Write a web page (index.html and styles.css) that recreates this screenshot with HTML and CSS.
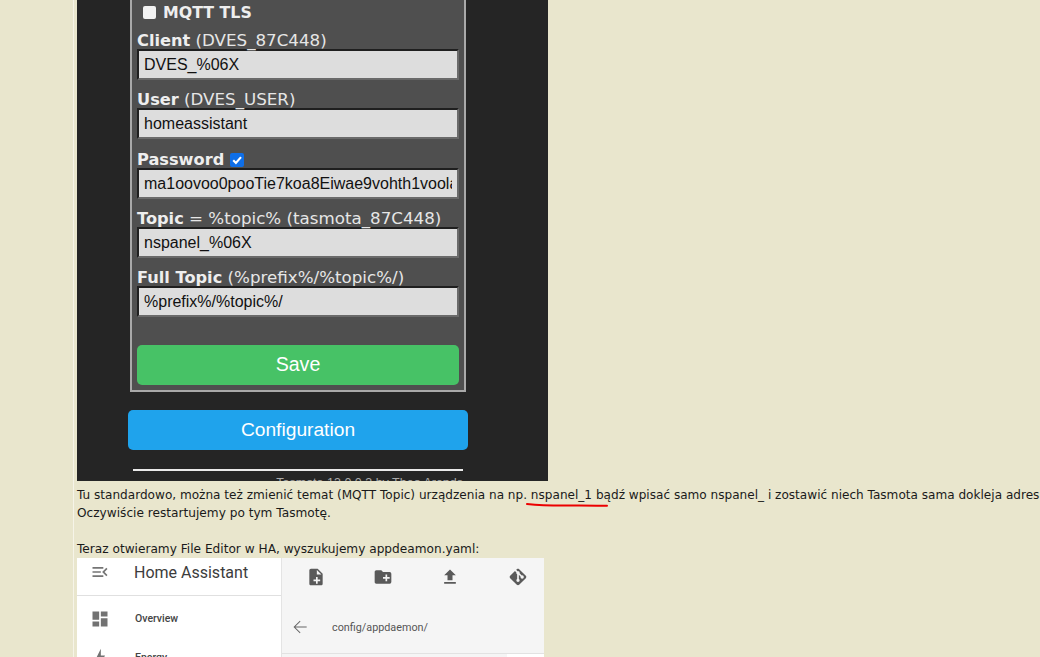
FILE: index.html
```html
<!DOCTYPE html>
<html lang="pl">
<head>
<meta charset="utf-8">
<title>Tasmota MQTT</title>
<link rel="stylesheet" href="styles.css">
</head>
<body>
<main class="post">
  <div class="shot-tasmota">
    <div class="form-box">
      <label class="tls"><span class="box"></span><b>MQTT TLS</b></label>
      <div class="field"><p class="lbl"><b>Client</b> (DVES_87C448)</p><div class="inp">DVES_%06X</div></div>
      <div class="field"><p class="lbl"><b>User</b> (DVES_USER)</p><div class="inp">homeassistant</div></div>
      <div class="field"><p class="lbl"><b>Password</b> <span class="check"><svg viewBox="0 0 13 13" width="13" height="13"><path d="M3 6.8 5.5 9.3 10.2 3.8" fill="none" stroke="#fff" stroke-width="2"/></svg></span></p><div class="inp"><span class="clip">ma1oovoo0pooTie7koa8Eiwae9vohth1voolaiw</span></div></div>
      <div class="field"><p class="lbl"><b>Topic</b> = %topic% (tasmota_87C448)</p><div class="inp">nspanel_%06X</div></div>
      <div class="field"><p class="lbl"><b>Full Topic</b> (%prefix%/%topic%/)</p><div class="inp">%prefix%/%topic%/</div></div>
      <div class="btn save">Save</div>
    </div>
    <div class="btn config">Configuration</div>
    <div class="rule"></div>
    <p class="credit">Tasmota 13.0.0.3 by Theo Arends</p>
  </div>
  <div class="copy">
    <p class="nowrap">Tu standardowo, można też zmienić temat (MQTT Topic) urządzenia na np. nspanel_1 bądź wpisać samo nspanel_ i zostawić niech Tasmota sama dokleja adres</p>
    <svg class="scribble" viewBox="0 0 82 6" width="82" height="6"><path d="M1 2C20 4 35 3.6 48 3.5S70 3.6 81 3.8" fill="none" stroke="#ec0000" stroke-width="2" stroke-linecap="round"/></svg>
    <p>Oczywiście restartujemy po tym Tasmotę.</p>
    <p>&nbsp;</p>
    <p>Teraz otwieramy File Editor w HA, wyszukujemy appdeamon.yaml:</p>
  </div>
  <div class="shot-ha">
    <aside class="sidebar">
      <div class="brand">
        <svg class="ic-menu" viewBox="0 0 24 24"><path d="M21,15.61L19.59,17L14.58,12L19.59,7L21,8.39L17.44,12L21,15.61M3,6H16V8H3V6M3,13V11H13V13H3M3,18V16H16V18H3Z"/></svg>
        <span>Home Assistant</span>
      </div>
      <div class="nav">
        <svg class="ic-nav" viewBox="0 0 24 24"><path d="M13,3V9H21V3M13,21H21V11H13M3,21H11V15H3M3,13H11V3H3V13Z"/></svg>
        <span>Overview</span>
      </div>
      <div class="nav nav-next">
        <svg class="ic-nav" viewBox="0 0 24 24"><path d="M11 15H6L13 1V9H18L11 23V15Z"/></svg>
        <span>Energy</span>
      </div>
    </aside>
    <section class="editor">
      <div class="tools">
        <svg viewBox="0 0 24 24"><path d="M14 2H6C4.89 2 4 2.89 4 4V20C4 21.11 4.89 22 6 22H18C19.11 22 20 21.11 20 20V8L14 2M13 9V3.5L18.5 9H13M17 17H14V20H12V17H9V15H12V12H14V15H17V17Z"/></svg>
        <svg viewBox="0 0 24 24"><path d="M10,4L12,6H20A2,2 0 0,1 22,8V18A2,2 0 0,1 20,20H4C2.89,20 2,19.1 2,18V6C2,4.89 2.89,4 4,4H10M15,9V12H12V14H15V17H17V14H20V12H17V9H15Z"/></svg>
        <svg viewBox="0 0 24 24"><path d="M9,16V10H5L12,3L19,10H15V16H9M5,20V18H19V20H5Z"/></svg>
        <svg viewBox="0 0 24 24"><path d="M2.6,10.59L8.38,4.8L10.07,6.5C9.83,7.35 10.22,8.28 11,8.73V14.27C10.4,14.61 10,15.26 10,16A2,2 0 0,0 12,18A2,2 0 0,0 14,16C14,15.26 13.6,14.61 13,14.27V9.41L15.07,11.5C15,11.65 15,11.82 15,12A2,2 0 0,0 17,14A2,2 0 0,0 19,12A2,2 0 0,0 17,10C16.82,10 16.65,10 16.5,10.07L13.93,7.5C14.19,6.57 13.71,5.55 12.78,5.16C12.35,5 11.9,4.96 11.5,5.07L9.8,3.38L10.59,2.6C11.37,1.81 12.63,1.81 13.41,2.6L21.4,10.59C22.19,11.37 22.19,12.63 21.4,13.41L13.41,21.4C12.63,22.19 11.37,22.19 10.59,21.4L2.6,13.41C1.81,12.63 1.81,11.37 2.6,10.59Z"/></svg>
      </div>
      <div class="path">
        <svg viewBox="0 0 24 24"><path d="M20,11.4V12.6H6.5L12.6,18.7L11.8,19.6L4.2,12L11.8,4.4L12.6,5.3L6.5,11.4H20Z"/></svg>
        <span>config/appdaemon/</span>
      </div>
      <div class="list"><div class="list-fill"></div></div>
    </section>
  </div>
</main>
</body>
</html>
```
FILE: styles.css
```css
* { box-sizing: border-box; }
html, body { height: 100%; }
body {
  margin: 0;
  background: #e9e6cd;
  overflow: hidden;
  font-family: "DejaVu Sans", Verdana, sans-serif;
}
p { margin: 0; }
.post {
  width: 967px;
  height: 657px;
  margin-left: 73px;
  padding-left: 3px;
  border-left: 1px solid #f6f4e8;
  overflow: hidden;
}
.shot-tasmota {
  width: 471px;
  height: 481px;
  overflow: hidden;
  background: #252525;
  padding-left: 51px;
  color: #e6e6e6;
  font-family: "Liberation Sans", Arial, sans-serif;
}
.form-box {
  width: 336px;
  height: 392px;
  margin-left: 2px;
  padding: 0 5px;
  background: #4f4f4f;
  border: 2px solid #a9a9a9;
  border-top: 0;
}
.tls {
  display: flex;
  align-items: center;
  gap: 7px;
  height: 27px;
  padding: 0 0 2px 6px;
}
.tls b, .lbl b {
  font-weight: 700;
  color: #eeeeee;
  font-family: "DejaVu Sans", Verdana, sans-serif;
}
.tls b { font-size: 15.8px; }
.box {
  width: 13px;
  height: 13px;
  background: #f2f2f2;
  border-radius: 2px;
}
.field { height: 59.3px; }
.lbl {
  height: 22px;
  font-family: "DejaVu Sans", Verdana, sans-serif;
  font-size: 16.7px;
  line-height: 27px;
  white-space: nowrap;
}
.lbl b { font-size: 16.2px; }
.check {
  display: inline-block;
  width: 14px;
  height: 14px;
  margin: -3px 0 -2px;
  background: #0f6fe8;
  border-radius: 2px;
}
.check svg { display: block; width: 14px; height: 14px; }
.inp {
  width: 322px;
  height: 31px;
  padding: 0 5px;
  background: #dddddd;
  border: 2px solid;
  border-color: #1f1f1f #6a6a6a #6a6a6a #1f1f1f;
  color: #111;
  font-size: 16px;
  line-height: 27px;
  overflow: hidden;
  white-space: nowrap;
}
.clip {
  display: block;
  overflow: hidden;
}
.btn {
  height: 40px;
  color: #fff;
  line-height: 39px;
  text-align: center;
  border-radius: 5px;
}
.save {
  width: 322px;
  margin-top: 21.5px;
  background: #47c266;
  font-size: 19.6px;
}
.config {
  width: 340px;
  margin-top: 18px;
  background: #1fa3ec;
  font-size: 19.2px;
}
.rule {
  width: 330px;
  height: 2px;
  margin: 19px 0 0 5px;
  background: #eaeaea;
}
.credit {
  width: 335px;
  margin-top: 4px;
  font-size: 12.5px;
  line-height: 16px;
  text-align: right;
  color: #aaa;
}
.copy {
  position: relative;
  height: 77px;
  padding-top: 5px;
  font-size: 12.15px;
  line-height: 18px;
  color: #1a1a1a;
}
.nowrap {
  white-space: nowrap;
  font-size: 12.08px;
}
.scribble {
  position: absolute;
  left: 449px;
  top: 21px;
}
.shot-ha {
  display: flex;
  width: 467px;
  height: 99px;
  overflow: hidden;
  background: #f5f5f5;
  font-family: Roboto, sans-serif;
}
.sidebar {
  width: 205px;
  flex: none;
  background: #fff;
  border-right: 1px solid #e4e4e4;
}
.brand {
  display: flex;
  align-items: center;
  height: 38px;
  padding: 0 0 9px 12.5px;
  border-bottom: 1px solid #e0e0e0;
  font-size: 16px;
  color: #3c3c3c;
}
.ic-menu {
  width: 20px;
  height: 20px;
  fill: #757575;
  margin-right: 24.5px;
}
.nav {
  display: flex;
  align-items: center;
  height: 35px;
  margin-top: 5px;
  padding-left: 12.5px;
  font-size: 10.5px;
  font-weight: 500;
  color: #444;
}
.nav-next { margin-top: 4px; }
.ic-nav {
  width: 20px;
  height: 20px;
  fill: #727272;
  margin-right: 25.5px;
}
.editor {
  flex: 1;
  min-width: 0;
}
.tools {
  display: flex;
  gap: 47.4px;
  height: 36px;
  padding: 8.5px 0 0 23.5px;
}
.tools svg {
  width: 20px;
  height: 20px;
  fill: #5a5a5a;
}
.path {
  display: flex;
  align-items: center;
  height: 60px;
  padding: 7px 0 0 8px;
  border-bottom: 1px solid #e2e2e2;
  font-size: 10.8px;
  color: #555;
}
.path svg {
  width: 20px;
  height: 20px;
  fill: #666;
  margin-right: 22px;
}
.list { height: 8px; }
.list-fill {
  width: 37px;
  height: 8px;
  margin-left: 225px;
  background: #fff;
}
```
